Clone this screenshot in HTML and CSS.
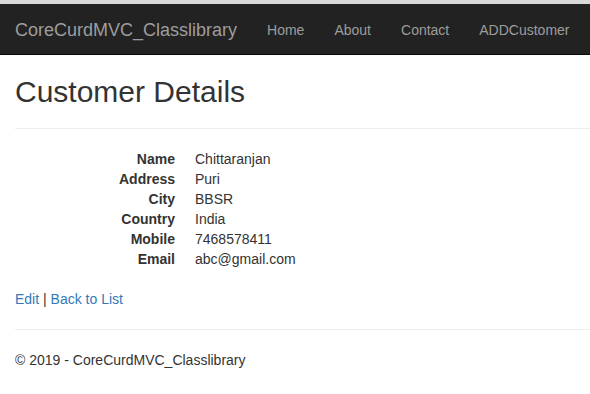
FILE: index.html
```html
<!DOCTYPE html>
<html lang="en">
<head>
<meta charset="utf-8">
<title>Customer Details</title>
<link rel="stylesheet" href="styles.css">
</head>
<body>
<div class="chrome"></div>
<nav class="navbar">
  <a class="brand" href="#">CoreCurdMVC_Classlibrary</a>
  <ul class="nav">
    <li><a href="#">Home</a></li>
    <li><a href="#">About</a></li>
    <li><a href="#">Contact</a></li>
    <li><a href="#">ADDCustomer</a></li>
  </ul>
</nav>
<div class="container">
  <h2>Customer Details</h2>
  <hr>
  <dl class="details">
    <dt>Name</dt><dd>Chittaranjan</dd>
    <dt>Address</dt><dd>Puri</dd>
    <dt>City</dt><dd>BBSR</dd>
    <dt>Country</dt><dd>India</dd>
    <dt>Mobile</dt><dd>7468578411</dd>
    <dt>Email</dt><dd>abc@gmail.com</dd>
  </dl>
  <p><a href="#">Edit</a> | <a href="#">Back to List</a></p>
  <hr>
  <footer>
    <p>&copy; 2019 - CoreCurdMVC_Classlibrary</p>
  </footer>
</div>
</body>
</html>
```

FILE: styles.css
```css
html, body {
  margin: 0;
  padding: 0;
}
body {
  font-family: "Liberation Sans", Arial, Helvetica, sans-serif;
  font-size: 14px;
  line-height: 20px;
  color: #333;
  background: #fff;
  overflow: hidden;
}
a {
  color: #337ab7;
  text-decoration: none;
}
.chrome {
  height: 4px;
  background: #dadada;
}
.navbar {
  display: flex;
  align-items: stretch;
  height: 50px;
  background: #222;
  border-bottom: 1px solid #080808;
}
.brand {
  display: block;
  padding: 16px 15px 14px;
  font-size: 18px;
  line-height: 20px;
  color: #9d9d9d;
  white-space: nowrap;
}
.nav {
  display: flex;
  margin: 0;
  padding: 0;
  list-style: none;
}
.nav a {
  display: block;
  padding: 16px 15px 14px;
  line-height: 20px;
  color: #9d9d9d;
  white-space: nowrap;
}
.container {
  padding: 0 0 0 15px;
}
h2 {
  margin: 20px 0 10px;
  font-size: 30px;
  font-weight: 500;
  line-height: 1.1;
}
hr {
  margin: 20px 0;
  border: 0;
  border-top: 1px solid #eee;
  height: 0;
}
.details {
  display: grid;
  grid-template-columns: 160px 1fr;
  column-gap: 20px;
  margin: 0 0 20px;
}
.details dt {
  font-weight: bold;
  text-align: right;
}
.details dd {
  margin: 0;
}
p {
  margin: 0 0 10px;
}
```
